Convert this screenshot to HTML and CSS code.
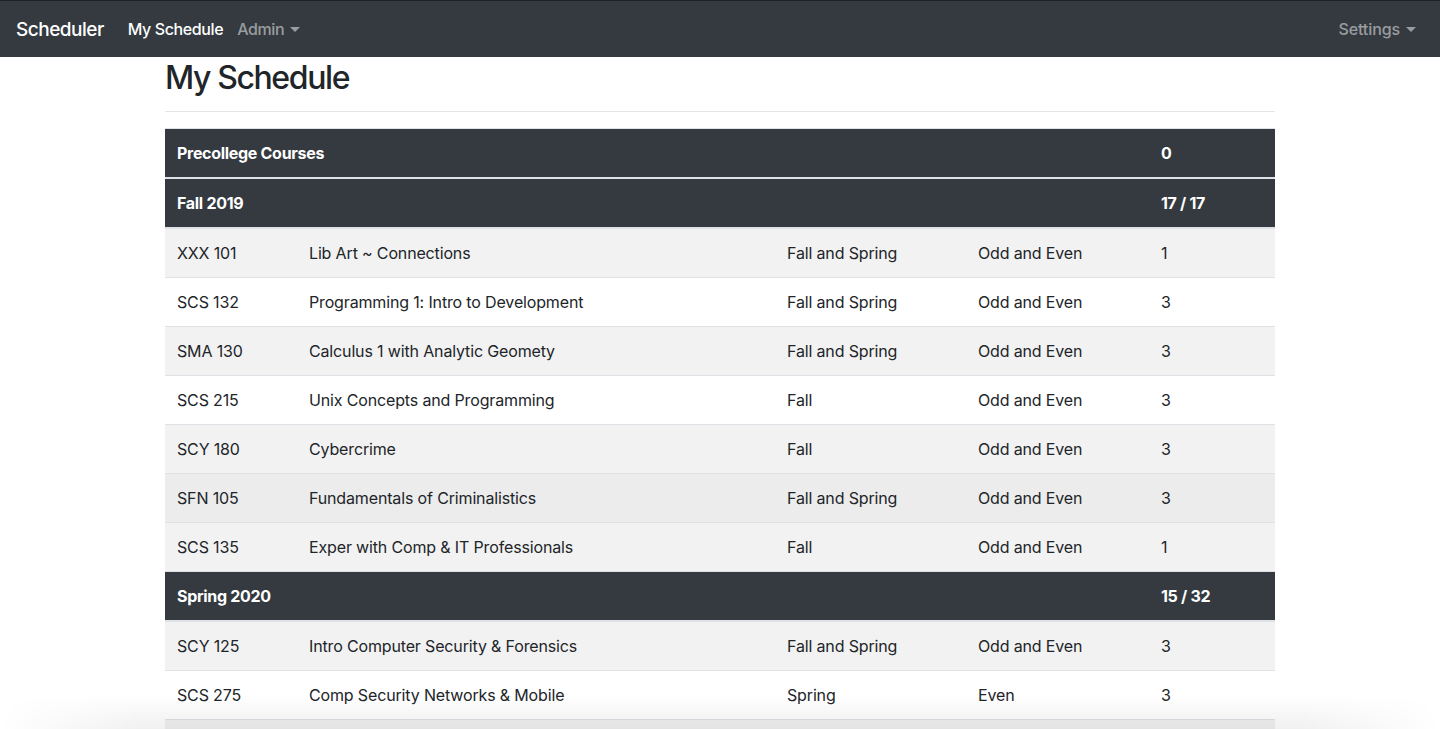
FILE: index.html
```html
<!DOCTYPE html>
<html lang="en">
<head>
<meta charset="utf-8">
<title>My Schedule</title>
<link rel="stylesheet" href="styles.css">
</head>
<body>
<nav class="navbar">
  <a class="brand" href="#">Scheduler</a>
  <ul class="nav-links">
    <li><a class="nav-link active" href="#">My Schedule</a></li>
    <li><a class="nav-link dropdown" href="#">Admin</a></li>
  </ul>
  <ul class="nav-links nav-right">
    <li><a class="nav-link dropdown" href="#">Settings</a></li>
  </ul>
</nav>
<main class="container">
  <h2 class="title">My Schedule</h2>
  <hr class="divider">
  <table class="schedule">
    <colgroup>
      <col class="c-code"><col class="c-name"><col class="c-term"><col class="c-year"><col class="c-cred">
    </colgroup>
    <tbody>
      <tr class="head"><th colspan="4">Precollege Courses</th><th>0</th></tr>
      <tr class="head"><th colspan="4">Fall 2019</th><th>17 / 17</th></tr>
      <tr><td>XXX 101</td><td>Lib Art ~ Connections</td><td>Fall and Spring</td><td>Odd and Even</td><td>1</td></tr>
      <tr><td>SCS 132</td><td>Programming 1: Intro to Development</td><td>Fall and Spring</td><td>Odd and Even</td><td>3</td></tr>
      <tr><td>SMA 130</td><td>Calculus 1 with Analytic Geomety</td><td>Fall and Spring</td><td>Odd and Even</td><td>3</td></tr>
      <tr><td>SCS 215</td><td>Unix Concepts and Programming</td><td>Fall</td><td>Odd and Even</td><td>3</td></tr>
      <tr><td>SCY 180</td><td>Cybercrime</td><td>Fall</td><td>Odd and Even</td><td>3</td></tr>
      <tr class="hover"><td>SFN 105</td><td>Fundamentals of Criminalistics</td><td>Fall and Spring</td><td>Odd and Even</td><td>3</td></tr>
      <tr><td>SCS 135</td><td>Exper with Comp &amp; IT Professionals</td><td>Fall</td><td>Odd and Even</td><td>1</td></tr>
      <tr class="head"><th colspan="4">Spring 2020</th><th>15 / 32</th></tr>
      <tr><td>SCY 125</td><td>Intro Computer Security &amp; Forensics</td><td>Fall and Spring</td><td>Odd and Even</td><td>3</td></tr>
      <tr><td>SCS 275</td><td>Comp Security Networks &amp; Mobile</td><td>Spring</td><td>Even</td><td>3</td></tr>
      <tr><td>SCS 280</td><td>Ethical Hacking</td><td>Spring</td><td>Even</td><td>3</td></tr>
    </tbody>
  </table>
</main>
<div class="window-shadow"></div>
</body>
</html>
```

FILE: styles.css
```css
* { box-sizing: border-box; }

html, body {
  margin: 0;
  padding: 0;
}

body {
  font-family: Inter, "Noto Sans", "Liberation Sans", sans-serif;
  font-size: 16px;
  line-height: 1.5;
  color: #212529;
  background: #fff;
  overflow: hidden;
}

a { text-decoration: none; }

.navbar {
  display: flex;
  align-items: center;
  height: 57px;
  padding: 9px 16px 8px;
  background: #343a40;
  border-top: 1px solid #1d2024;
}

.brand {
  font-size: 19px;
  line-height: 30px;
  font-weight: 500;
  color: #fff;
  margin-right: 16px;
  letter-spacing: -0.5px;
}

.nav-links {
  display: flex;
  list-style: none;
  margin: 0;
  padding: 0;
}

.nav-right { margin-left: auto; }

.nav-link {
  display: block;
  padding: 7px 8px 9px;
  font-weight: 500;
  font-size: 16px;
  line-height: 24px;
  color: rgba(255, 255, 255, 0.5);
  letter-spacing: -0.4px;
}

.nav-links:first-of-type .nav-link.dropdown { margin-left: -2px; }

.nav-right .nav-link { letter-spacing: -0.1px; }

.nav-link.active { color: #fff; }

.dropdown::after {
  content: "";
  display: inline-block;
  margin-left: 6px;
  vertical-align: 3px;
  border-top: 5px solid;
  border-right: 5px solid transparent;
  border-left: 5px solid transparent;
  border-bottom: 0;
}

.container {
  width: 1110px;
  margin: 0 auto;
}

.title {
  margin: 2px 0 8px;
  font-size: 32px;
  line-height: 1.2;
  font-weight: 500;
  letter-spacing: -1.4px;
}

.divider {
  margin: 14px 0 16px;
  border: 0;
  border-top: 1px solid rgba(0, 0, 0, 0.1);
}

.schedule {
  width: 100%;
  border-collapse: collapse;
  table-layout: fixed;
}

.c-code { width: 132px; }
.c-name { width: 478px; }
.c-term { width: 191px; }
.c-year { width: 183px; }
.c-cred { width: 126px; }

.schedule td,
.schedule th {
  padding: 12px;
  line-height: 24px;
  text-align: left;
  vertical-align: top;
  border-top: 1px solid #dee2e6;
  white-space: nowrap;
  letter-spacing: -0.15px;
}

.schedule th {
  font-weight: 700;
  font-size: 16px;
  color: #fff;
  background: #343a40;
  letter-spacing: -0.3px;
  border-bottom: 2px solid #dee2e6;
}

.schedule tbody tr:nth-of-type(odd) td {
  background: rgba(0, 0, 0, 0.05);
}

.schedule tbody tr.hover td {
  background: rgba(0, 0, 0, 0.075);
}

.window-shadow {
  position: fixed;
  left: 0;
  right: 0;
  bottom: 0;
  height: 34px;
  pointer-events: none;
  background: linear-gradient(to bottom, rgba(0, 0, 0, 0), rgba(0, 0, 0, 0.06));
  -webkit-mask-image: linear-gradient(to right, transparent 0, #000 140px, #000 1300px, transparent 1440px);
  mask-image: linear-gradient(to right, transparent 0, #000 140px, #000 1300px, transparent 1440px);
}
```
